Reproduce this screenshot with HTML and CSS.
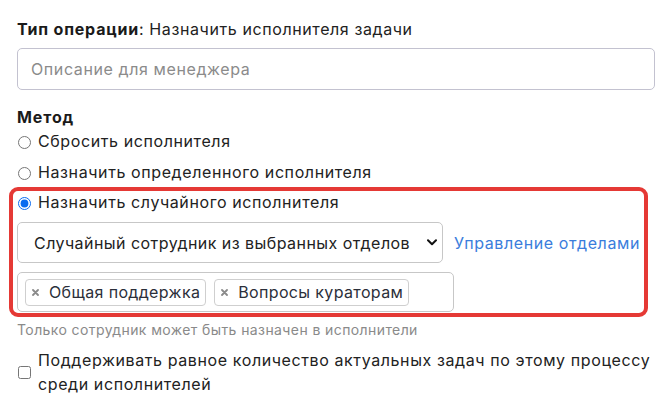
FILE: index.html
```html
<!DOCTYPE html>
<html lang="ru">
<head>
<meta charset="utf-8">
<link rel="stylesheet" href="styles.css">
</head>
<body>
<div class="page">
  <div class="title"><b>Тип операции</b>: Назначить исполнителя задачи</div>
  <input class="text-input" type="text" placeholder="Описание для менеджера">
  <div class="section-label">Метод</div>
  <label class="radio-row"><input type="radio" name="m"><span>Сбросить исполнителя</span></label>
  <label class="radio-row"><input type="radio" name="m"><span>Назначить определенного исполнителя</span></label>
  <div class="highlight">
    <label class="radio-row first"><input type="radio" name="m" checked><span>Назначить случайного исполнителя</span></label>
    <div class="select-row">
      <div class="select-wrap">
        <select class="select">
          <option>Случайный сотрудник из выбранных отделов</option>
        </select>
        <svg class="chevron" width="10" height="7" viewBox="0 0 10 7"><path d="M1 1.2 L5 5.2 L9 1.2" fill="none" stroke="#111" stroke-width="2" stroke-linecap="round" stroke-linejoin="round"/></svg>
      </div>
      <a class="link" href="#">Управление отделами</a>
    </div>
    <div class="multi">
      <span class="tag"><svg class="tag-x" width="7" height="7" viewBox="0 0 7 7"><path d="M1 1 L6 6 M6 1 L1 6" stroke="#8a8a8a" stroke-width="1.8" stroke-linecap="round"/></svg>Общая поддержка</span>
      <span class="tag"><svg class="tag-x" width="7" height="7" viewBox="0 0 7 7"><path d="M1 1 L6 6 M6 1 L1 6" stroke="#8a8a8a" stroke-width="1.8" stroke-linecap="round"/></svg>Вопросы кураторам</span>
    </div>
  </div>
  <div class="help">Только сотрудник может быть назначен в исполнители</div>
  <label class="check-row"><input type="checkbox"><span>Поддерживать равное количество актуальных задач по этому процессу среди исполнителей</span></label>
</div>
</body>
</html>
```

FILE: styles.css
```css
html, body {
  margin: 0;
  padding: 0;
  background: #fff;
}
body {
  font-family: Inter, "Noto Sans", sans-serif;
  font-size: 16px;
  line-height: 24px;
  letter-spacing: 0.6px;
  color: #222;
}
.page {
  display: flex;
  flex-direction: column;
  align-items: flex-start;
  width: 638px;
  padding: 17px 0 0 17px;
}
.title {
  color: #222;
}
.title b {
  font-weight: 700;
  letter-spacing: 0.8px;
  color: #1a1a1a;
}
.text-input {
  display: block;
  box-sizing: border-box;
  width: 638px;
  height: 42px;
  margin-top: 7px;
  padding: 0 13px;
  border: 1px solid #c3c2d0;
  border-radius: 5px;
  font: inherit;
  letter-spacing: 0.6px;
  color: #222;
  outline: none;
}
.text-input::placeholder {
  color: #8b8b8b;
}
.section-label {
  margin-top: 15px;
  font-weight: 700;
  letter-spacing: 0.9px;
  line-height: 24px;
  color: #1a1a1a;
}
.radio-row {
  display: flex;
  align-items: center;
  height: 24px;
  margin-bottom: 7px;
  color: #222;
}
.radio-row input {
  width: 13px;
  height: 13px;
  margin: 2px 7px 0 1px;
  accent-color: #0a6cf0;
}
.highlight {
  box-sizing: border-box;
  width: 639px;
  margin: -4px 0 0 -8px;
  padding: 0 4px 1px 4px;
  border: 4px solid #e53935;
  border-radius: 9px;
}
.radio-row.first {
  height: 22px;
  margin-bottom: 9px;
}
.select-row {
  display: flex;
  align-items: center;
  gap: 11px;
}
.select-wrap {
  position: relative;
  width: 428px;
  height: 41px;
}
.select {
  box-sizing: border-box;
  width: 100%;
  height: 41px;
  padding: 0 30px 0 16px;
  border: 1px solid #c7c7c7;
  border-radius: 5px;
  background: #fff;
  font: inherit;
  letter-spacing: 0.45px;
  color: #222;
  appearance: none;
  -webkit-appearance: none;
  outline: none;
}
.chevron {
  position: absolute;
  right: 6px;
  top: 17px;
}
.link {
  color: #3a7ddc;
  text-decoration: none;
  white-space: nowrap;
}
.multi {
  box-sizing: border-box;
  display: flex;
  align-items: center;
  gap: 8px;
  width: 437px;
  height: 40px;
  margin-top: 9px;
  padding: 0 7px;
  border: 1px solid #c7c7c7;
  border-radius: 5px;
}
.tag {
  display: flex;
  align-items: center;
  box-sizing: border-box;
  height: 27px;
  padding: 0 5px 0 6px;
  border: 1px solid #cfcfcf;
  border-radius: 4px;
  letter-spacing: 0.35px;
  color: #2b2f3a;
  white-space: nowrap;
}
.tag-x {
  flex: none;
  margin-right: 10px;
}
.help {
  margin-top: 3px;
  font-size: 14px;
  line-height: 20px;
  letter-spacing: 0.4px;
  color: #8a8a8a;
}
.check-row {
  display: flex;
  align-items: center;
  margin-top: 8px;
  color: #222;
}
.check-row input {
  flex: none;
  width: 13px;
  height: 13px;
  margin: 0 7px 0 1px;
}
```
